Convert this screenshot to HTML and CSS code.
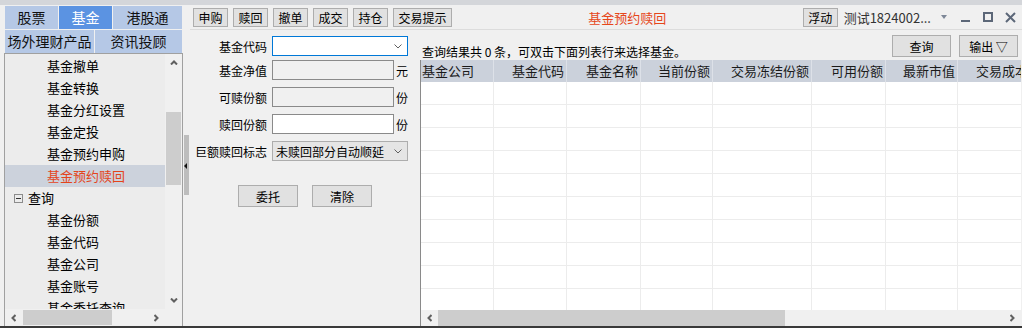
FILE: index.html
```html
<!DOCTYPE html>
<html lang="zh-CN">
<head>
  <meta charset="UTF-8">
  <title>基金预约赎回</title>
  <link rel="stylesheet" href="styles.css">
</head>
<body>
  <div class="app">
    <div class="top-strip"></div>
    <div class="workspace">

      <aside class="sidebar">
        <div class="sidebar-col">
          <div class="tabs">
            <div class="tab-row">
              <span class="tab tab-s">股票</span>
              <span class="tab tab-s active">基金</span>
              <span class="tab tab-fill">港股通</span>
            </div>
            <div class="tab-row">
              <span class="tab tab-w">场外理财产品</span>
              <span class="tab tab-fill">资讯投顾</span>
            </div>
          </div>

          <div class="tree-box">
            <div class="tree-area">
              <ul class="tree">
                <li>基金撤单</li>
                <li>基金转换</li>
                <li>基金分红设置</li>
                <li>基金定投</li>
                <li>基金预约申购</li>
                <li class="selected">基金预约赎回</li>
                <li class="group">
                  <svg class="toggle" width="9" height="9" viewBox="0 0 9 9"><rect x="0.5" y="0.5" width="8" height="8" fill="none" stroke="#8c8c8c"/><path d="M2 4.5h5" stroke="#333"/></svg>
                  <span>查询</span>
                </li>
                <li>基金份额</li>
                <li>基金代码</li>
                <li>基金公司</li>
                <li>基金账号</li>
                <li>基金委托查询</li>
              </ul>
              <div class="vscroll">
                <span class="sb-btn"><svg width="8" height="5" viewBox="0 0 8 5"><path d="M1 4.5L4 1.5L7 4.5" fill="none" stroke="#606060" stroke-width="2"/></svg></span>
                <div class="sb-track"><div class="vthumb"></div></div>
                <span class="sb-btn"><svg width="8" height="5" viewBox="0 0 8 5"><path d="M1 0.5L4 3.5L7 0.5" fill="none" stroke="#606060" stroke-width="2"/></svg></span>
              </div>
            </div>
            <div class="tree-bottom">
              <div class="hscroll tree-hscroll">
                <span class="sb-btn"><svg width="5" height="8" viewBox="0 0 5 8"><path d="M4.5 1L1.5 4L4.5 7" fill="none" stroke="#606060" stroke-width="2"/></svg></span>
                <div class="hthumb tree-hthumb"></div>
                <div class="sb-track"></div>
                <span class="sb-btn"><svg width="5" height="8" viewBox="0 0 5 8"><path d="M0.5 1L3.5 4L0.5 7" fill="none" stroke="#606060" stroke-width="2"/></svg></span>
              </div>
              <div class="corner"></div>
            </div>
          </div>
        </div>

        <div class="splitter">
          <div class="grip">
            <svg width="3" height="6" viewBox="0 0 3 6"><path d="M3 0L0 3L3 6Z" fill="#111"/></svg>
          </div>
        </div>
      </aside>

      <main class="main">
        <div class="toolbar">
          <div class="tool-group">
            <button class="btn tool-btn">申购</button>
            <button class="btn tool-btn">赎回</button>
            <button class="btn tool-btn">撤单</button>
            <button class="btn tool-btn">成交</button>
            <button class="btn tool-btn">持仓</button>
            <button class="btn tool-btn">交易提示</button>
          </div>
          <div class="page-title">基金预约赎回</div>
          <div class="tool-right">
            <button class="btn tool-btn">浮动</button>
            <span class="account">测试1824002...</span>
            <svg class="acc-arrow" width="6" height="4" viewBox="0 0 6 4"><path d="M0 0H6L3 4Z" fill="#7d8797"/></svg>
            <svg class="win-min" width="9" height="12" viewBox="0 0 9 12"><path d="M0 10H9" stroke="#5c6778" stroke-width="2"/></svg>
            <svg class="win-max" width="10" height="10" viewBox="0 0 10 10"><rect x="1" y="1" width="8" height="8" fill="none" stroke="#5c6778" stroke-width="2"/></svg>
            <svg class="win-close" width="11" height="11" viewBox="0 0 11 11"><path d="M1 1L10 10M10 1L1 10" stroke="#5c6778" stroke-width="2"/></svg>
          </div>
        </div>

        <div class="content">
          <section class="form-panel">
            <div class="field">
              <label class="field-label">基金代码</label>
              <div class="input input-focus">
                <svg class="chev" width="8" height="5" viewBox="0 0 8 5"><path d="M0.5 0.5L4 4L7.5 0.5" fill="none" stroke="#606060"/></svg>
              </div>
            </div>
            <div class="field field-tight">
              <label class="field-label">基金净值</label>
              <div class="input input-short input-disabled"></div>
              <span class="unit">元</span>
            </div>
            <div class="field">
              <label class="field-label">可赎份额</label>
              <div class="input input-short input-disabled"></div>
              <span class="unit">份</span>
            </div>
            <div class="field">
              <label class="field-label">赎回份额</label>
              <div class="input input-short"></div>
              <span class="unit">份</span>
            </div>
            <div class="field">
              <label class="field-label">巨额赎回标志</label>
              <div class="input select">
                <span>未赎回部分自动顺延</span>
                <svg class="chev" width="8" height="5" viewBox="0 0 8 5"><path d="M0.5 0.5L4 4L7.5 0.5" fill="none" stroke="#606060"/></svg>
              </div>
            </div>
            <div class="form-actions">
              <button class="btn form-btn">委托</button>
              <button class="btn form-btn">清除</button>
            </div>
          </section>

          <section class="results">
            <div class="result-head">
              <span class="result-info">查询结果共 0 条，可双击下面列表行来选择基金。</span>
              <button class="btn head-btn">查询</button>
              <button class="btn head-btn">输出 ▽</button>
            </div>
            <div class="table-box">
              <div class="grid-row grid-head">
                <span class="cell cell-first">基金公司</span>
                <span class="cell">基金代码</span>
                <span class="cell">基金名称</span>
                <span class="cell">当前份额</span>
                <span class="cell">交易冻结份额</span>
                <span class="cell">可用份额</span>
                <span class="cell">最新市值</span>
                <span class="cell">交易成本</span>
              </div>
              <div class="grid-body">
                <div class="grid-row"><span class="cell"></span><span class="cell"></span><span class="cell"></span><span class="cell"></span><span class="cell"></span><span class="cell"></span><span class="cell"></span><span class="cell"></span></div>
                <div class="grid-row"><span class="cell"></span><span class="cell"></span><span class="cell"></span><span class="cell"></span><span class="cell"></span><span class="cell"></span><span class="cell"></span><span class="cell"></span></div>
                <div class="grid-row"><span class="cell"></span><span class="cell"></span><span class="cell"></span><span class="cell"></span><span class="cell"></span><span class="cell"></span><span class="cell"></span><span class="cell"></span></div>
                <div class="grid-row"><span class="cell"></span><span class="cell"></span><span class="cell"></span><span class="cell"></span><span class="cell"></span><span class="cell"></span><span class="cell"></span><span class="cell"></span></div>
                <div class="grid-row"><span class="cell"></span><span class="cell"></span><span class="cell"></span><span class="cell"></span><span class="cell"></span><span class="cell"></span><span class="cell"></span><span class="cell"></span></div>
                <div class="grid-row"><span class="cell"></span><span class="cell"></span><span class="cell"></span><span class="cell"></span><span class="cell"></span><span class="cell"></span><span class="cell"></span><span class="cell"></span></div>
                <div class="grid-row"><span class="cell"></span><span class="cell"></span><span class="cell"></span><span class="cell"></span><span class="cell"></span><span class="cell"></span><span class="cell"></span><span class="cell"></span></div>
                <div class="grid-row"><span class="cell"></span><span class="cell"></span><span class="cell"></span><span class="cell"></span><span class="cell"></span><span class="cell"></span><span class="cell"></span><span class="cell"></span></div>
                <div class="grid-row"><span class="cell"></span><span class="cell"></span><span class="cell"></span><span class="cell"></span><span class="cell"></span><span class="cell"></span><span class="cell"></span><span class="cell"></span></div>
                <div class="grid-row"><span class="cell"></span><span class="cell"></span><span class="cell"></span><span class="cell"></span><span class="cell"></span><span class="cell"></span><span class="cell"></span><span class="cell"></span></div>
              </div>
              <div class="hscroll table-hscroll">
                <span class="sb-btn"><svg width="5" height="8" viewBox="0 0 5 8"><path d="M4.5 1L1.5 4L4.5 7" fill="none" stroke="#606060" stroke-width="2"/></svg></span>
                <div class="hthumb table-hthumb"></div>
                <div class="sb-track"></div>
                <span class="sb-btn"><svg width="5" height="8" viewBox="0 0 5 8"><path d="M0.5 1L3.5 4L0.5 7" fill="none" stroke="#606060" stroke-width="2"/></svg></span>
              </div>
            </div>
          </section>
        </div>
      </main>

    </div>
    <div class="bottom-line"></div>
  </div>
</body>
</html>
```

FILE: styles.css
```css
* {
  box-sizing: border-box;
}
body {
  margin: 0;
  width: 1022px;
  height: 328px;
  overflow: hidden;
  background: #f0f0f0;
  font-family: "Noto Sans CJK SC", "Noto Sans", sans-serif;
  font-size: 12px;
  color: #000;
}
.app {
  display: flex;
  flex-direction: column;
  height: 328px;
}
.top-strip {
  flex: none;
  height: 5px;
  background: #d4d6da;
}
.workspace {
  flex: 1;
  display: flex;
  min-height: 0;
}
.bottom-line {
  flex: none;
  height: 2px;
  background: #3a3a3a;
}

/* left navigation */
.sidebar {
  flex: none;
  width: 190px;
  display: flex;
}
.sidebar-col {
  width: 183px;
  padding-left: 4px;
  display: flex;
  flex-direction: column;
}
.tabs {
  margin: 1px 1px 0 1px;
  display: flex;
  flex-direction: column;
  gap: 1px;
}
.tab-row {
  display: flex;
  gap: 1px;
  height: 23px;
}
.tab {
  background: #b5c8e6;
  color: #111;
  font-size: 14px;
  line-height: 23px;
  text-align: center;
  white-space: nowrap;
}
.tab.active {
  background: #5b93e2;
  color: #fff;
}
.tab-s { width: 53px; }
.tab-w { width: 89px; }
.tab-fill { flex: 1; }

.tree-box {
  flex: 1;
  min-height: 0;
  display: flex;
  flex-direction: column;
  border: 1px solid #a0a0a0;
  border-bottom: 0;
}
.tree-area {
  flex: 1;
  min-height: 0;
  display: flex;
}
.tree {
  width: 160px;
  margin: 0;
  padding: 1px 0 0;
  list-style: none;
  background: #ececec;
  overflow: hidden;
  font-size: 13px;
}
.tree li {
  height: 22px;
  line-height: 22px;
  padding-left: 42px;
  white-space: nowrap;
}
.tree li.selected {
  background: #ccd2dc;
  color: #e4441b;
}
.tree li.group {
  display: flex;
  align-items: center;
  gap: 5px;
  padding-left: 9px;
}
.toggle {
  flex: none;
}

/* scrollbars */
.vscroll {
  width: 17px;
  display: flex;
  flex-direction: column;
  background: #f0f0f0;
}
.sb-btn {
  flex: none;
  width: 17px;
  height: 17px;
  display: flex;
  align-items: center;
  justify-content: center;
}
.hscroll .sb-btn {
  height: auto;
}
.sb-track {
  flex: 1;
}
.vthumb {
  margin: 41px 0 0 1px;
  width: 15px;
  height: 73px;
  background: #cdcdcd;
}
.tree-bottom {
  flex: none;
  height: 17px;
  display: flex;
}
.hscroll {
  display: flex;
  background: #f0f0f0;
}
.tree-hscroll {
  width: 160px;
}
.hthumb {
  flex: none;
  background: #cdcdcd;
  margin: 1px 0;
}
.tree-hthumb {
  width: 89px;
  margin-left: 1px;
}
.corner {
  flex: 1;
  background: #f0f0f0;
}

.splitter {
  width: 7px;
  padding: 130px 1px 0 1px;
}
.grip {
  height: 60px;
  background: #bdbdbd;
  display: flex;
  align-items: center;
  padding-top: 2px;
}

/* main area */
.main {
  flex: 1;
  min-width: 0;
  display: flex;
  flex-direction: column;
}
.btn {
  font-family: inherit;
  font-size: 12px;
  color: #000;
  background: #e1e1e1;
  border: 1px solid #adadad;
  padding: 0;
  margin: 0;
  cursor: pointer;
}
.toolbar {
  flex: none;
  height: 25px;
  display: flex;
  align-items: center;
  border-bottom: 1px solid #dcdcdc;
}
.tool-group {
  display: flex;
  gap: 5px;
  margin-left: 3px;
}
.tool-btn {
  height: 19px;
  padding: 0 4.5px;
  line-height: 17px;
}
.page-title {
  flex: 1;
  text-align: center;
  color: #e6461a;
  font-size: 13px;
}
.tool-right {
  display: flex;
  align-items: center;
}
.account {
  margin-left: 6px;
  font-size: 13px;
  color: #333;
  font-family: "Noto Sans CJK SC", "Liberation Sans", sans-serif;
}
.acc-arrow { margin-left: 10px; }
.win-min { margin-left: 14px; }
.win-max { margin-left: 13px; }
.win-close { margin-left: 12px; margin-right: 6px; }

.content {
  flex: 1;
  min-height: 0;
  display: flex;
}

/* order form */
.form-panel {
  flex: none;
  width: 230px;
  padding-top: 6px;
}
.field {
  display: flex;
  align-items: center;
  height: 20px;
  margin-top: 7px;
}
.field:first-child {
  margin-top: 0;
}
.field-tight {
  margin-top: 4px;
}
.field-label {
  width: 77px;
  margin-right: 5px;
  text-align: right;
  white-space: nowrap;
}
.input {
  width: 136px;
  height: 20px;
  background: #fff;
  border: 1px solid #8a8a8a;
  display: flex;
  align-items: center;
  justify-content: flex-end;
}
.input-focus {
  border-color: #0078d7;
}
.input-short {
  width: 122px;
}
.input-disabled {
  background: #f0f0f0;
}
.select {
  background: #e5e5e5;
  border-color: #adadad;
  justify-content: space-between;
  padding-left: 3px;
}
.chev {
  margin-right: 5px;
}
.unit {
  margin-left: 2px;
}
.form-actions {
  display: flex;
  justify-content: center;
  gap: 14px;
  margin-top: 24px;
}
.form-btn {
  width: 60px;
  height: 22px;
}

/* results list */
.results {
  flex: 1;
  min-width: 0;
  display: flex;
  flex-direction: column;
}
.result-head {
  flex: none;
  height: 30px;
  display: flex;
  align-items: flex-start;
  gap: 8px;
  padding: 0 4px 0 2px;
}
.result-info {
  flex: 1;
  margin-top: 15px;
  line-height: 14px;
  white-space: nowrap;
}
.head-btn {
  margin-top: 5px;
  width: 59px;
  height: 22px;
}
.table-box {
  flex: 1;
  min-height: 0;
  display: flex;
  flex-direction: column;
  border-left: 1px solid #8a8a8a;
  margin-right: 1px;
  overflow: hidden;
}
.grid-row {
  display: grid;
  grid-template-columns: 73px 73px 74px 72px 99px 74px 72px 73px;
  width: max-content;
}
.grid-head {
  flex: none;
  height: 22px;
  background: #cbd1db;
}
.cell {
  border-right: 1px solid #ececec;
  white-space: nowrap;
  overflow: hidden;
}
.grid-head .cell {
  border-right-color: #dde1e8;
  font-size: 13px;
  line-height: 22px;
  text-align: right;
  padding-right: 2px;
  color: #1a1a1a;
}
.grid-head .cell-first {
  text-align: left;
  padding-left: 1px;
}
.grid-body {
  flex: 1;
  min-height: 0;
  background: #fff;
  overflow: hidden;
}
.grid-body .grid-row {
  height: 23px;
  border-bottom: 1px solid #ececec;
}
.table-hscroll {
  flex: none;
  height: 16px;
}
.table-hthumb {
  width: 347px;
  margin: 0;
}
```
